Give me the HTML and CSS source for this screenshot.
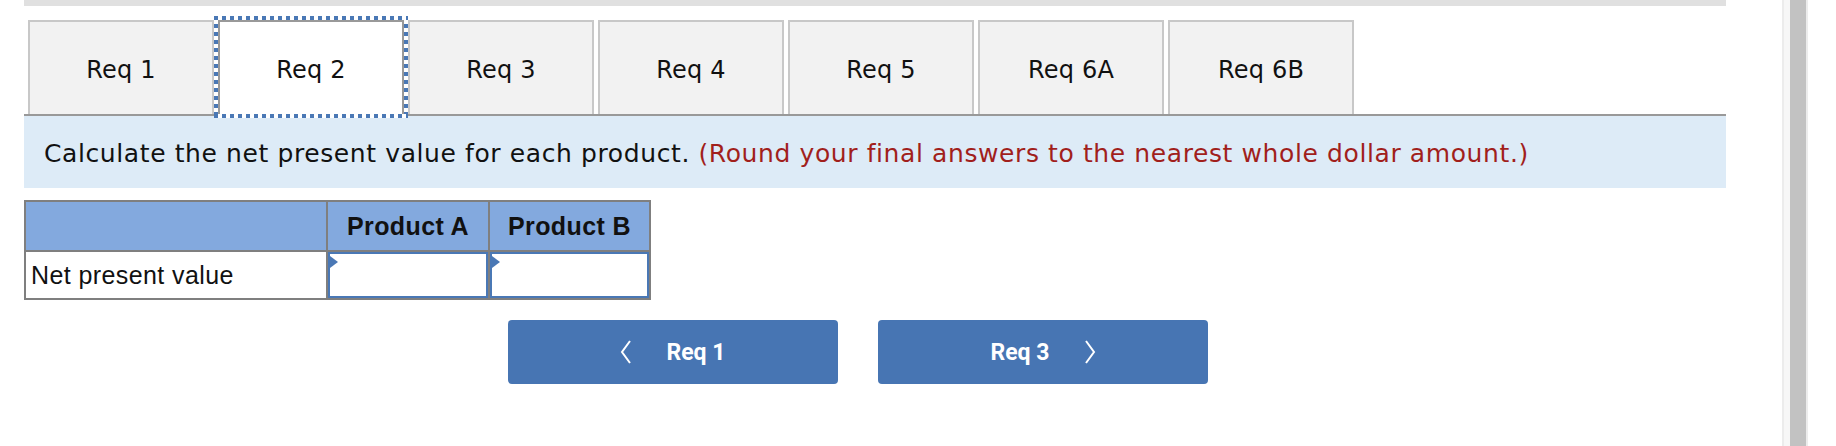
FILE: index.html
```html
<!DOCTYPE html>
<html lang="en">
<head>
<meta charset="utf-8">
<title>Req 2</title>
<link rel="stylesheet" href="styles.css">
</head>
<body>
<div class="page">
  <div class="content">
    <div class="topbar"></div>
    <div class="tabs">
      <div class="tab">Req 1</div>
      <div class="tab active">Req 2</div>
      <div class="tab">Req 3</div>
      <div class="tab">Req 4</div>
      <div class="tab">Req 5</div>
      <div class="tab">Req 6A</div>
      <div class="tab">Req 6B</div>
    </div>
    <div class="instructions">Calculate the net present value for each product. <span class="note">(Round your final answers to the nearest whole dollar amount.)</span></div>
    <table class="grid">
      <colgroup>
        <col class="c-label">
        <col class="c-val">
        <col class="c-val2">
      </colgroup>
      <thead>
        <tr>
          <th></th>
          <th>Product A</th>
          <th>Product B</th>
        </tr>
      </thead>
      <tbody>
        <tr>
          <td class="label">Net present value</td>
          <td class="cell"><div class="field"><span class="flag"></span></div></td>
          <td class="cell"><div class="field"><span class="flag"></span></div></td>
        </tr>
      </tbody>
    </table>
    <div class="nav">
      <div class="btn">
        <svg class="chev" viewBox="0 0 12 24" width="12" height="24"><polyline points="10,1 2,12 10,23"/></svg>
        <span>Req 1</span>
      </div>
      <div class="btn">
        <span>Req 3</span>
        <svg class="chev" viewBox="0 0 12 24" width="12" height="24"><polyline points="2,1 10,12 2,23"/></svg>
      </div>
    </div>
  </div>
  <div class="scrollbar"><div class="thumb"></div></div>
</div>
</body>
</html>
```

FILE: styles.css
```css
html, body {
  margin: 0;
  padding: 0;
  background: #fff;
}

.page {
  display: flex;
  height: 446px;
  overflow: hidden;
}

.content {
  width: 1782px;
  box-sizing: border-box;
  padding: 0 56px 0 24px;
}

.topbar {
  height: 6px;
  background: #e0e0e0;
}

.tabs {
  display: flex;
  margin-top: 14px;
  border-bottom: 2px solid #999;
}

.tab {
  position: relative;
  box-sizing: border-box;
  width: 186px;
  height: 94px;
  margin-left: 4px;
  padding-top: 4px;
  border: 2px solid #c8c8c8;
  border-bottom: none;
  background: #f2f2f2;
  display: flex;
  align-items: center;
  justify-content: center;
  font-family: "DejaVu Sans", sans-serif;
  font-size: 24px;
  letter-spacing: 0.2px;
  color: #111;
}

.tab.active {
  background: #fff;
  border-color: #999;
}

.tab.active::after {
  content: "";
  position: absolute;
  top: -6px;
  left: -6px;
  right: -6px;
  bottom: -4px;
  pointer-events: none;
  background:
    repeating-linear-gradient(90deg, #4a78b5 0 4px, #fff 4px 8px) left top / 100% 4px no-repeat,
    repeating-linear-gradient(90deg, #4a78b5 0 4px, #fff 4px 8px) left bottom / 100% 4px no-repeat,
    repeating-linear-gradient(180deg, #4a78b5 0 4px, #fff 4px 8px) left top / 4px 100% no-repeat,
    repeating-linear-gradient(180deg, #4a78b5 0 4px, #fff 4px 8px) right top / 4px 100% no-repeat;
}

.instructions {
  box-sizing: border-box;
  height: 72px;
  display: flex;
  align-items: center;
  padding: 3px 0 0 20px;
  background: #ddebf7;
  font-family: "DejaVu Sans", sans-serif;
  font-size: 25px;
  letter-spacing: 0.6px;
  color: #111;
  white-space: pre;
}

.note {
  color: #a11f1c;
}

.grid {
  margin-top: 12px;
  border-collapse: collapse;
  table-layout: fixed;
  width: 627px;
  font-family: "Liberation Sans", Arial, sans-serif;
  font-size: 25px;
  letter-spacing: 0.4px;
  color: #111;
}

.c-label { width: 302px; }
.c-val { width: 162px; }
.c-val2 { width: 161px; }

.grid th,
.grid td {
  border: 2px solid #7f7f7f;
  padding: 0;
}

.grid thead th {
  height: 48px;
  background: #83a9de;
  font-weight: bold;
  text-align: center;
}

.grid tbody td {
  height: 46px;
}

.grid td.label {
  padding-left: 5px;
  text-align: left;
}

.field {
  position: relative;
  box-sizing: border-box;
  height: 46px;
  border: 2px solid #4a78b5;
  background: #fff;
}

.flag {
  position: absolute;
  left: 0;
  top: 2px;
  width: 0;
  height: 0;
  border-top: 6px solid transparent;
  border-bottom: 6px solid transparent;
  border-left: 8px solid #4a78b5;
}

.nav {
  display: flex;
  gap: 40px;
  margin-top: 20px;
  padding-left: 484px;
}

.btn {
  width: 330px;
  height: 64px;
  border-radius: 4px;
  background: #4775b3;
  display: flex;
  align-items: center;
  justify-content: center;
  gap: 34px;
  color: #fff;
  font-family: Roboto, "Liberation Sans", sans-serif;
  font-weight: bold;
  font-size: 23px;
}

.chev {
  display: block;
  fill: none;
  stroke: #fff;
  stroke-width: 2;
}

.scrollbar {
  width: 26px;
  height: 446px;
  box-sizing: border-box;
  border-left: 2px solid #ececec;
  border-right: 2px solid #ececec;
  background: #f7f7f7;
  padding-left: 6px;
}

.thumb {
  width: 16px;
  height: 100%;
  background: #c2c2c2;
}
```
